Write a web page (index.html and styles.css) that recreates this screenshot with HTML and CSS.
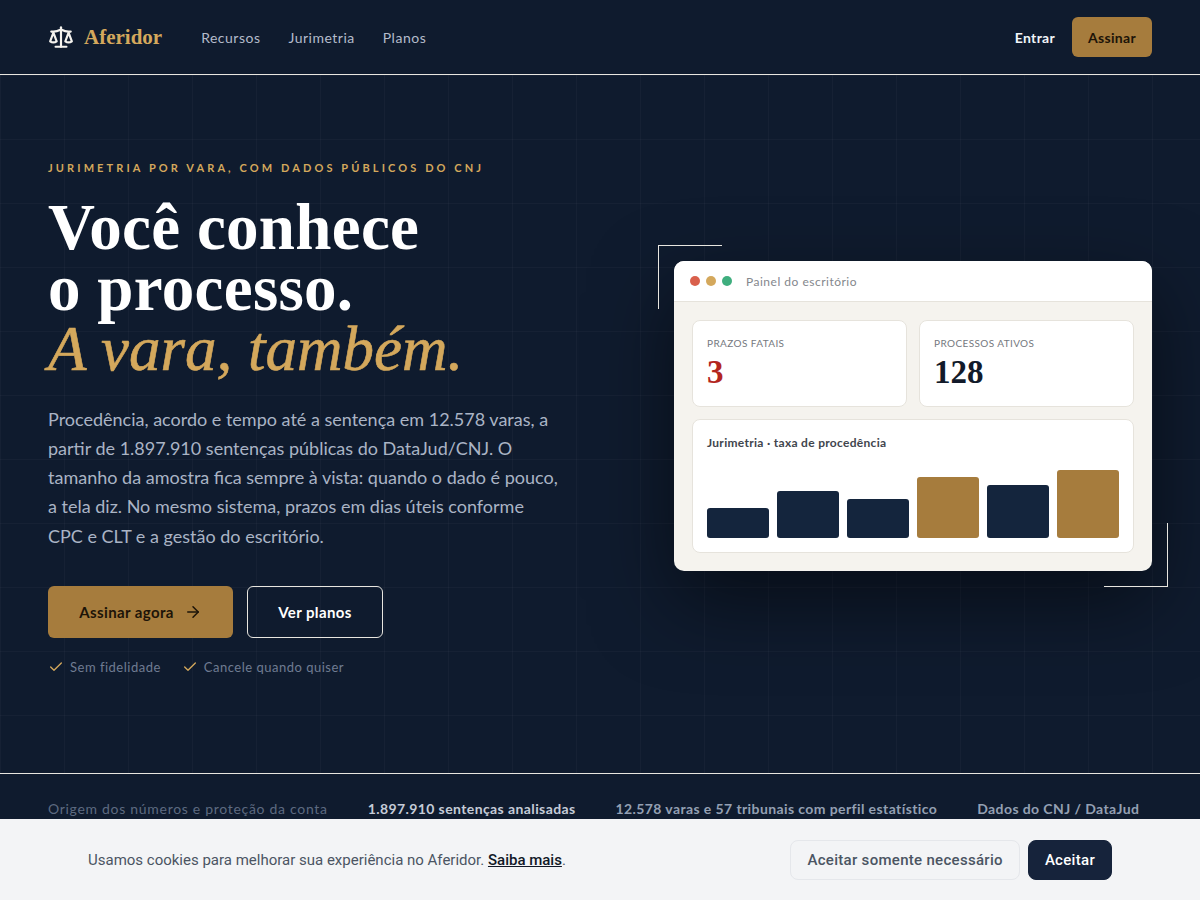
FILE: index.html
```html
<!DOCTYPE html>
<html lang="pt-BR">
<head>
  <meta charset="UTF-8">
  <title>Aferidor</title>
  <link rel="stylesheet" href="styles.css">
</head>
<body>

  <header class="topbar">
    <div class="topbar-left">
      <a class="logo" href="#">
        <svg class="logo-icon" viewBox="0 0 24 24" fill="none" stroke="currentColor" stroke-width="2" stroke-linecap="round" stroke-linejoin="round">
          <path d="m16 16 3-8 3 8c-.87.65-1.92 1-3 1s-2.13-.35-3-1Z"/>
          <path d="m2 16 3-8 3 8c-.87.65-1.92 1-3 1s-2.13-.35-3-1Z"/>
          <path d="M7 21h10"/>
          <path d="M12 3v18"/>
          <path d="M3 7h2c2 0 5-1 7-2 2 1 5 2 7 2h2"/>
        </svg>
        <span class="logo-text">Aferidor</span>
      </a>
      <nav class="nav">
        <a href="#">Recursos</a>
        <a href="#">Jurimetria</a>
        <a href="#">Planos</a>
      </nav>
    </div>
    <div class="topbar-right">
      <a class="login" href="#">Entrar</a>
      <a class="btn-small" href="#">Assinar</a>
    </div>
  </header>

  <section class="hero">
    <div class="hero-text">
      <p class="eyebrow">JURIMETRIA POR VARA, COM DADOS PÚBLICOS DO CNJ</p>
      <h1>Você conhece<br>o processo.<br><em>A vara, também.</em></h1>
      <p class="lead">Procedência, acordo e tempo até a sentença em 12.578 varas, a partir de 1.897.910 sentenças públicas do DataJud/CNJ. O tamanho da amostra fica sempre à vista: quando o dado é pouco, a tela diz. No mesmo sistema, prazos em dias úteis conforme CPC e CLT e a gestão do escritório.</p>
      <div class="cta">
        <a class="btn btn-gold" href="#">Assinar agora
          <svg class="arrow" viewBox="0 0 24 24" fill="none" stroke="currentColor" stroke-width="2" stroke-linecap="round" stroke-linejoin="round"><path d="M5 12h14"/><path d="m12 5 7 7-7 7"/></svg>
        </a>
        <a class="btn btn-outline" href="#">Ver planos</a>
      </div>
      <ul class="perks">
        <li><svg viewBox="0 0 24 24" fill="none" stroke="currentColor" stroke-width="2" stroke-linecap="round" stroke-linejoin="round"><path d="M20 6 9 17l-5-5"/></svg>Sem fidelidade</li>
        <li><svg viewBox="0 0 24 24" fill="none" stroke="currentColor" stroke-width="2" stroke-linecap="round" stroke-linejoin="round"><path d="M20 6 9 17l-5-5"/></svg>Cancele quando quiser</li>
      </ul>
    </div>

    <div class="panel-wrap">
      <span class="corner corner-tl"></span>
      <span class="corner corner-br"></span>
      <div class="panel">
        <div class="panel-bar">
          <span class="dot dot-red"></span>
          <span class="dot dot-yellow"></span>
          <span class="dot dot-green"></span>
          <span class="panel-title">Painel do escritório</span>
        </div>
        <div class="panel-body">
          <div class="cards">
            <div class="card">
              <div class="card-label">PRAZOS FATAIS</div>
              <div class="card-num red">3</div>
            </div>
            <div class="card">
              <div class="card-label">PROCESSOS ATIVOS</div>
              <div class="card-num">128</div>
            </div>
          </div>
          <div class="card chart">
            <div class="chart-title">Jurimetria · taxa de procedência</div>
            <div class="bars">
              <div class="bar" style="height: 30px"></div>
              <div class="bar" style="height: 47px"></div>
              <div class="bar" style="height: 39px"></div>
              <div class="bar gold" style="height: 61px"></div>
              <div class="bar" style="height: 53px"></div>
              <div class="bar gold" style="height: 68px"></div>
            </div>
          </div>
        </div>
      </div>
    </div>
  </section>

  <section class="strip">
    <span class="strip-label">Origem dos números e proteção da conta</span>
    <span class="strip-item first">1.897.910 sentenças analisadas</span>
    <span class="strip-item">12.578 varas e 57 tribunais com perfil estatístico</span>
    <span class="strip-item">Dados do CNJ / DataJud</span>
  </section>

  <div class="cookie">
    <div class="cookie-inner">
      <p>Usamos cookies para melhorar sua experiência no Aferidor. <a href="#">Saiba mais</a>.</p>
      <div class="cookie-actions">
        <button class="cookie-btn">Aceitar somente necessário</button>
        <button class="cookie-btn dark">Aceitar</button>
      </div>
    </div>
  </div>

</body>
</html>
```

FILE: styles.css
```css
* {
  box-sizing: border-box;
}

html, body {
  height: 900px;
  overflow: hidden;
}

body {
  margin: 0;
  background-color: #0f1b2e;
  color: white;
  font-family: 'Lato', 'Noto Sans', sans-serif;
}

a {
  color: inherit;
  text-decoration: none;
}

.topbar {
  height: 75px;
  padding: 0 48px;
  display: flex;
  justify-content: space-between;
  align-items: center;
  border-bottom: 1px solid #e8e6e0;
}

.topbar-left, .topbar-right {
  display: flex;
  align-items: center;
}

.logo {
  display: flex;
  align-items: center;
  gap: 10px;
  margin-right: 39px;
}

.logo-icon {
  width: 26px;
  height: 26px;
  color: #f5f3ee;
}

.logo-text {
  font-family: 'Liberation Serif', serif;
  font-weight: 700;
  font-size: 21px;
  color: #d4a85c;
}

.nav {
  display: flex;
  gap: 28px;
  font-size: 14px;
  letter-spacing: 0.5px;
  color: #b4bccb;
}

.login {
  font-size: 14px;
  font-weight: 700;
  letter-spacing: 0.3px;
  color: #f1f5f9;
  margin-right: 17px;
}

.btn-small {
  width: 80px;
  height: 40px;
  display: flex;
  justify-content: center;
  align-items: center;
  background-color: #a67c3d;
  border-radius: 6px;
  color: #1d1408;
  font-size: 14px;
  font-weight: 700;
  letter-spacing: 0.3px;
}

.hero {
  height: 698px;
  padding: 84px 48px 0;
  display: grid;
  grid-template-columns: 1fr 478px;
  column-gap: 64px;
  background-image:
    linear-gradient(rgba(255,255,255,0.028) 1px, transparent 1px),
    linear-gradient(90deg, rgba(255,255,255,0.028) 1px, transparent 1px);
  background-size: 64px 64px;
}

.eyebrow {
  margin: 0;
  font-size: 11px;
  line-height: 18px;
  font-weight: 700;
  letter-spacing: 3.1px;
  color: #d4a85c;
}

h1 {
  margin: 20px 0 0;
  font-family: 'Liberation Serif', serif;
  font-weight: 700;
  font-size: 65px;
  line-height: 60.5px;
  letter-spacing: 0.3px;
  color: white;
}

h1 em {
  font-size: 63px;
  font-weight: 400;
  letter-spacing: 0;
  -webkit-text-stroke: 0.6px #d4a85c;
  color: #d4a85c;
}

.lead {
  margin: 25px 0 0;
  width: 510px;
  font-size: 18px;
  line-height: 29.25px;
  color: #aab4c5;
}

.cta {
  margin-top: 35px;
  display: flex;
  gap: 14px;
}

.btn {
  height: 52px;
  display: flex;
  align-items: center;
  justify-content: center;
  gap: 10px;
  border-radius: 6px;
  font-size: 15px;
  font-weight: 700;
  letter-spacing: 0.4px;
}

.btn-gold {
  width: 185px;
  background-color: #a67c3d;
  color: #1d1408;
}

.arrow {
  width: 18px;
  height: 18px;
}

.btn-outline {
  width: 136px;
  border: 1px solid #e8e6e0;
  color: white;
}

.perks {
  list-style: none;
  margin: 21px 0 0;
  padding: 0;
  display: flex;
  gap: 21px;
  font-size: 13px;
  letter-spacing: 0.5px;
  color: #6f7c92;
}

.perks li {
  display: flex;
  align-items: center;
  gap: 6px;
}

.perks svg {
  width: 16px;
  height: 16px;
  color: #d4a85c;
}

.panel-wrap {
  position: relative;
  margin-top: 102px;
  height: 310px;
}

.corner {
  position: absolute;
  width: 64px;
  height: 64px;
  border: 0 solid #e8e6e0;
}

.corner-tl {
  left: -16px;
  top: -16px;
  border-width: 1px 0 0 1px;
}

.corner-br {
  right: -16px;
  bottom: -16px;
  border-width: 0 1px 1px 0;
}

.panel {
  position: relative;
  height: 310px;
  border-radius: 10px;
  overflow: hidden;
  background-color: #f5f3ee;
}

.panel-wrap::before {
  content: "";
  position: absolute;
  inset: 0;
  border-radius: 10px;
  box-shadow: 0 30px 80px rgba(0,0,0,0.5);
}

.panel-bar {
  height: 41px;
  padding: 0 16px;
  display: flex;
  align-items: center;
  gap: 6px;
  background-color: white;
  border-bottom: 1px solid #e6e3dc;
}

.dot {
  width: 10px;
  height: 10px;
  border-radius: 50%;
}

.dot-red { background-color: #d9604c; }
.dot-yellow { background-color: #d4a85c; }
.dot-green { background-color: #3fae7e; }

.panel-title {
  margin-left: 8px;
  font-size: 12px;
  letter-spacing: 0.5px;
  color: #84878c;
}

.panel-body {
  padding: 18px;
}

.cards {
  display: grid;
  grid-template-columns: 1fr 1fr;
  gap: 12px;
  margin-bottom: 12px;
}

.card {
  background-color: white;
  border: 1px solid #e6e3dc;
  border-radius: 8px;
  padding: 15px 14px;
}

.cards .card {
  height: 87px;
}

.card-label {
  font-size: 10px;
  line-height: 14px;
  letter-spacing: 0.4px;
  color: #75787e;
}

.card-num {
  margin-top: 5px;
  font-family: 'Liberation Serif', serif;
  font-weight: 700;
  font-size: 33px;
  line-height: 34px;
  color: #121a2a;
}

.card-num.red {
  color: #b3261e;
}

.chart {
  height: 134px;
}

.chart-title {
  font-size: 12px;
  line-height: 15px;
  font-weight: 700;
  letter-spacing: 0.3px;
  color: #41454d;
}

.bars {
  margin-top: 20px;
  height: 68px;
  display: flex;
  align-items: flex-end;
  gap: 8px;
}

.bar {
  flex: 1;
  border-radius: 3px;
  background-color: #14253d;
}

.bar.gold {
  background-color: #a67c3d;
}

.strip {
  border-top: 1px solid #e8e6e0;
  padding: 26px 48px 0;
  display: flex;
  gap: 40px;
  font-size: 14px;
  line-height: 18px;
}

.strip-label {
  letter-spacing: 0.7px;
  color: #5d6a80;
}

.strip-item {
  font-weight: 700;
  letter-spacing: 0.4px;
  color: #94a0b3;
}

.strip-item.first {
  color: #c5ccd8;
}

.cookie {
  position: fixed;
  left: 0;
  right: 0;
  bottom: 0;
  height: 81px;
  background-color: #f3f4f6;
}

.cookie-inner {
  width: 1024px;
  height: 100%;
  margin: 0 auto;
  display: flex;
  justify-content: space-between;
  align-items: center;
}

.cookie p {
  margin: 0;
  font-family: 'Roboto', sans-serif;
  font-size: 15px;
  color: #4b5563;
}

.cookie p a {
  color: #111827;
  font-weight: 500;
  text-decoration: underline;
}

.cookie-actions {
  display: flex;
  gap: 8px;
}

.cookie-btn {
  height: 40px;
  padding: 0 16px;
  border: 1px solid #e5e7eb;
  border-radius: 8px;
  background-color: #f3f4f6;
  color: #4b5563;
  font-family: 'Roboto', sans-serif;
  font-size: 15px;
  font-weight: 500;
  letter-spacing: 0.3px;
}

.cookie-btn.dark {
  background-color: #16233b;
  border-color: #16233b;
  color: white;
}
```
